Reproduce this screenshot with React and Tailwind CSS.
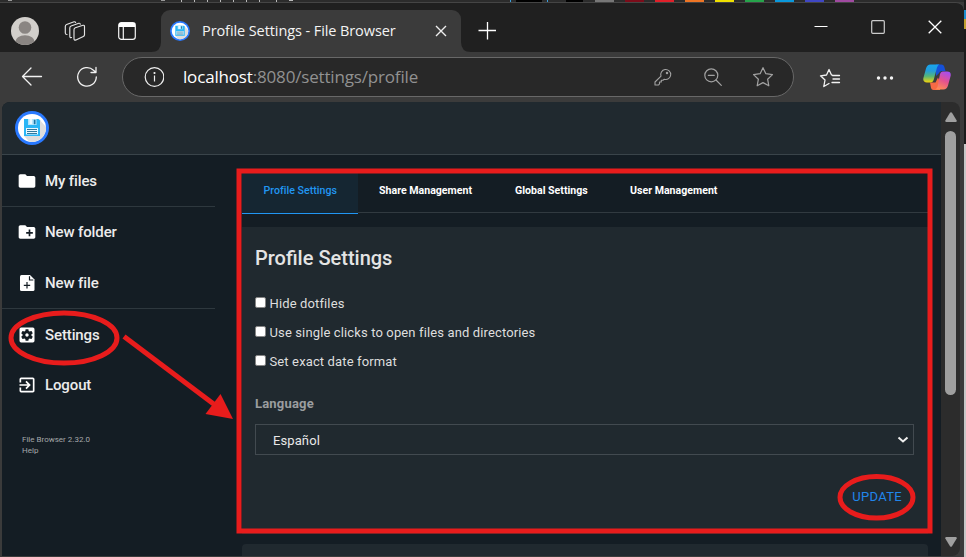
import React from "react";
import {
  MdFolder,
  MdCreateNewFolder,
  MdSettingsApplications,
  MdExitToApp,
} from "react-icons/md";

function Logo({ className }) {
  return (
    <svg viewBox="0 0 34 34" className={className}>
      <circle cx="17" cy="17" r="17" fill="#2979ff" />
      <circle cx="17" cy="17" r="14" fill="#fff" />
      <path d="M24 8l7 8a14 14 0 0 1-17 14.6L9 25z" fill="#dedede" />
      <path d="M9 8h14.500L25 9.500V25H9z" fill="#29b6f6" />
      <path d="M13 8h8.500v6H13z" fill="#b3e5fc" />
      <path d="M14.500 8h2.500v5h-2.500z" fill="#e8f8ff" />
      <path d="M18.800 8.800h1.700v4.500h-1.700z" fill="#1976a8" />
      <path d="M11 17h12v6.500H11z" fill="#e8f8ff" />
      <path d="M12 18.500h10M12 20.500h10M12 22.500h10" stroke="#1c6a92" strokeWidth=".9" />
    </svg>
  );
}

function NewFileIcon({ className }) {
  return (
    <svg viewBox="0 0 20 20" className={className}>
      <path d="M4.500 2H13l4.500 4.500V16.500q0 1.500-1.500 1.500H4.500Q3 18 3 16.500V3.500Q3 2 4.500 2z" fill="currentColor" />
      <path d="M12.500 3.200V7h3.800M10 9v6.500M6.800 12.300h6.400" fill="none" stroke="#141d24" strokeWidth="1.2" />
    </svg>
  );
}

function Avatar() {
  return (
    <svg viewBox="0 0 28 28" className="h-7 w-7">
      <clipPath id="av">
        <circle cx="14" cy="14" r="14" />
      </clipPath>
      <g clipPath="url(#av)">
        <rect width="28" height="28" fill="#d2cfcb" />
        <circle cx="14" cy="10.500" r="6.300" fill="#8a8582" />
        <ellipse cx="14" cy="25" rx="9.800" ry="6.800" fill="#8a8582" />
      </g>
    </svg>
  );
}

function WorkspacesIcon() {
  return (
    <svg viewBox="0 0 22 22" className="h-[22px] w-[22px]" fill="none" stroke="#e4e4e4" strokeWidth="1.15" strokeLinejoin="round" strokeLinecap="round">
      <path d="M11.300 7.800l7.700-2.500q1.500-.3 1.500 1.200v8.200q0 1.300-1.200 1.700l-7.300 3.500q-2 .7-2-1.200V9.800q0-1.500 1.300-2z" />
      <path d="M7.500 17.500q-1.700.5-1.700-1.300V8q0-1.500 1.300-2l7.700-2.700q1.200-.3 1.500.9" />
      <path d="M3 14.500q-1.700 0-1.700-1.500V6.500q0-1.500 1.300-2l7.500-2.700q1-.3 1.500.6" />
    </svg>
  );
}

function TabsIcon() {
  return (
    <svg viewBox="0 0 18 18" className="h-[18px] w-[18px]" fill="none" stroke="#f5f5f5" strokeWidth="1.2">
      <rect x=".7" y=".7" width="16.600" height="16.600" rx="2.600" />
      <path d="M1 3h16" stroke="#fff" strokeWidth="4" />
      <path d="M5.300 5v12" />
    </svg>
  );
}

const STAR = "M10 1.500l2.600 5.500 6 .8-4.400 4.200 1.100 6L10 15.100 4.700 18l1.100-6L1.400 7.800l6-.8z";

function CopilotIcon() {
  return (
    <svg viewBox="0 0 28 26" className="h-[26px] w-7">
      <defs>
        <linearGradient id="ca" x1="0" y1="0" x2="0" y2="1">
          <stop offset="0" stopColor="#17a5ef" />
          <stop offset=".35" stopColor="#249dd9" />
          <stop offset=".65" stopColor="#55b578" />
          <stop offset="1" stopColor="#f4d40b" />
        </linearGradient>
        <linearGradient id="cb" x1=".7" y1="0" x2=".3" y2="1">
          <stop offset="0" stopColor="#a64df0" />
          <stop offset=".5" stopColor="#e5528e" />
          <stop offset="1" stopColor="#ff8c55" />
        </linearGradient>
      </defs>
      <path d="M13 .5h5.500q2 0 2.700 2L22.500 7H19q-2.500 0-3.300 2.500L13 12z" fill="#1550d8" />
      <path d="M7 18.500h5.500l2.500-5 3 7-1 5.500h-6.500q-2 0-2.500-2z" fill="#f76a45" />
      <path d="M7.500.5H16.500q-1.800.7-2.500 3L10.800 15.500Q10 18.500 7.500 18.500H4Q-.5 18.500.4 14L3 4.500Q4.200.5 7.500.5z" fill="url(#ca)" />
      <path d="M19.500 7.500H24q4.500 0 3.600 4.500L25 21.500q-1.200 4-4.500 4H12q1.800-.5 2.500-2.800L17 10Q17.800 7.500 19.500 7.500z" fill="url(#cb)" />
    </svg>
  );
}

function DesktopStrip() {
  return (
    <div className="flex h-0.5 shrink-0 bg-[#2c2c2c]">
      <div className="ml-2 h-px w-1 bg-[#999]" />
      <div className="ml-[149px] h-px w-1 bg-[#999]" />
      <div className="ml-4 h-0.5 w-px bg-[#bbb]" />
      <div className="ml-3 h-0.5 w-px bg-[#bbb]" />
      <div className="ml-3 h-0.5 w-px bg-[#bbb]" />
      <div className="ml-3 h-0.5 w-px bg-[#bbb]" />
      <div className="ml-3 h-0.5 w-px bg-[#bbb]" />
      <div className="ml-3 h-0.5 w-px bg-[#bbb]" />
      <div className="ml-3 h-0.5 w-px bg-[#bbb]" />
      <div className="ml-4 h-0.5 w-px bg-[#bbb]" />
      <div className="ml-3 h-px w-1 bg-[#bbb]" />
      <div className="ml-auto mr-[5px] h-0.5 w-px bg-[#3a9fdc]" />
      <div className="flex w-[448px] shrink-0">
        <div className="h-0.5 w-[26px] bg-black" />
        <div className="ml-[5px] h-0.5 w-px bg-[#3a9fdc]" />
        <div className="ml-[18px] h-0.5 w-[17px] bg-black" />
        <div className="ml-3 h-0.5 w-[19px] bg-[#777]" />
        <div className="ml-[11px] h-0.5 w-[19px] bg-[#7c0c1a]" />
        <div className="ml-[11px] h-0.5 w-[19px] bg-[#e0202a]" />
        <div className="ml-[11px] h-0.5 w-[19px] bg-[#ee7525]" />
        <div className="ml-[11px] h-0.5 w-[19px] bg-[#efe000]" />
        <div className="ml-[11px] h-0.5 w-[19px] bg-[#26a44b]" />
        <div className="ml-[11px] h-0.5 w-[19px] bg-[#0a98dc]" />
        <div className="ml-[11px] h-0.5 w-[19px] bg-[#3f47c4]" />
        <div className="ml-[11px] h-0.5 w-[19px] bg-[#a04aa0]" />
      </div>
    </div>
  );
}

function TitleBar() {
  return (
    <div className="flex h-[50px] shrink-0 items-stretch rounded-tr-lg border-t border-[#454545] bg-[#202020]">
      <div className="flex w-[151px] items-center pb-px pl-[11px] pt-[7px]">
        <Avatar />
        <div className="ml-[25px]"><WorkspacesIcon /></div>
        <div className="ml-[32px]"><TabsIcon /></div>
      </div>
      <svg viewBox="0 0 10 10" className="h-2.5 w-2.5 self-end" fill="#3b3b3b"><path d="M10 0v10H0Q10 10 10 0z" /></svg>
      <div className="mt-[7px] flex w-[300px] items-center rounded-t-[9px] bg-[#3b3b3b] pb-[3px] pl-[9px]">
        <Logo className="mt-0.5 h-5 w-5 shrink-0" />
        <span className="ml-3 mt-0.5 w-[200px] whitespace-nowrap font-['Open_Sans',sans-serif] text-[14.5px] tracking-[-0.09px] text-[#f4f4f4]">
          Profile Settings - File Browser
        </span>
        <svg viewBox="0 0 12 12" className="ml-[33px] mt-[3px] h-3 w-3 shrink-0" stroke="#eee" strokeWidth="1.4"><path d="M1 1l10 10M11 1L1 11" /></svg>
      </div>
      <svg viewBox="0 0 10 10" className="h-2.5 w-2.5 self-end" fill="#3b3b3b"><path d="M0 0v10h10Q0 10 0 0z" /></svg>
      <svg viewBox="0 0 18 18" className="ml-[7px] mt-[19px] h-[18px] w-[18px]" stroke="#fff" strokeWidth="1.3"><path d="M9.500 0v17.500M.5 8.500h18" /></svg>
      <div className="ml-auto flex pr-[22px] pt-[17px]">
        <svg viewBox="0 0 14 14" className="mr-[43px] h-3.5 w-3.5" stroke="#fff"><path d="M.5 6.500h13" /></svg>
        <svg viewBox="0 0 14 14" className="mr-[43px] h-3.5 w-3.5" fill="none" stroke="#ccc" strokeWidth="1.2"><rect x=".7" y=".7" width="12.600" height="12.600" rx="1" /></svg>
        <svg viewBox="0 0 14 14" className="h-3.5 w-3.5" stroke="#fff" strokeWidth="1.3"><path d="M.7.7l12.600 12.600M13.300.7L.7 13.300" /></svg>
      </div>
    </div>
  );
}

function Toolbar() {
  return (
    <div className="flex h-[50px] shrink-0 items-center bg-[#3b3b3b] pl-[21px]">
      <svg viewBox="0 0 22 20" className="h-5 w-[22px]" fill="none" stroke="#f2f2f2" strokeWidth="1.3" strokeLinecap="round" strokeLinejoin="round"><path d="M20.500 9.500H1.500M10 1L1.500 9.500 10 18" /></svg>
      <svg viewBox="0 0 22 22" className="ml-[33px] h-[22px] w-[22px]" fill="none" stroke="#f2f2f2" strokeWidth="1.3" strokeLinecap="round" strokeLinejoin="round"><path d="M20.300 11A9.300 9.300 0 1 1 17.500 4.200L19.500 6M20 1.500V6.500H15" /></svg>
      <div className="ml-6 flex h-10 w-[672px] items-center rounded-full border border-[#686868] bg-[#282828] pl-[21px]">
        <svg viewBox="0 0 20 20" className="h-5 w-5 shrink-0" fill="none" stroke="#eee" strokeWidth="1.2"><circle cx="10.500" cy="10" r="9.300" /><path d="M10.500 8.500V14.500" /><circle cx="10.500" cy="6" r=".5" fill="#eee" /></svg>
        <div className="ml-[19px] w-[460px] whitespace-nowrap pb-px font-['Open_Sans',sans-serif] text-[17px] tracking-[-0.17px] text-[#919191]">
          <span className="text-white">localhost</span>:8080/settings/profile
        </div>
        <svg viewBox="0 0 18 18" className="ml-[11px] h-[18px] w-[18px] shrink-0" fill="none" stroke="#a2a2a2" strokeWidth="1.1" strokeLinejoin="round"><path d="M7 8.200A5 5 0 1 1 10.300 11.300L9 12.300H7.300V14H5.500v1.800L4.500 17H1v-3z" /><circle cx="13" cy="5" r=".7" fill="#a2a2a2" /></svg>
        <svg viewBox="0 0 18 18" className="ml-8 h-[18px] w-[18px] shrink-0" fill="none" stroke="#a2a2a2" strokeWidth="1.2" strokeLinecap="round"><circle cx="7.300" cy="7.300" r="6.500" /><path d="M4.300 7.300h6M12 12l5.300 5.300" /></svg>
        <svg viewBox="0 0 20 20" className="ml-[30px] h-[22px] w-[22px] shrink-0" fill="none" stroke="#a2a2a2" strokeWidth="1.1" strokeLinejoin="round"><path d={STAR} /></svg>
      </div>
      <svg viewBox="0 0 22 20" className="ml-[25px] mt-0.5 h-5 w-[22px]" fill="none" stroke="#f2f2f2" strokeWidth="1.3" strokeLinejoin="round" strokeLinecap="round">
        <path d="M14.500 7.500L12.500 6.900 10 1.500 7.500 7l-6 .8L6 12l-1.200 6.500L10 15.500M13.500 7.500h7M14 11h6.500M13 14.500h7.500" />
      </svg>
      <svg viewBox="0 0 18 4" className="ml-[35px] mt-0.5 h-1 w-[18px]" fill="#f4f4f4"><circle cx="2.500" cy="2" r="1.700" /><circle cx="9" cy="2" r="1.700" /><circle cx="15.500" cy="2" r="1.700" /></svg>
      <div className="ml-[29px]"><CopilotIcon /></div>
    </div>
  );
}

function NavItem({ icon: Icon, label, className }) {
  return (
    <div className={"flex items-center gap-2 pl-[15px] text-[15px] font-medium tracking-[-0.12px] text-[#ececec] " + className}>
      <Icon className="mb-px h-5 w-5 text-white" />
      <span>{label}</span>
    </div>
  );
}

function Sidebar() {
  return (
    <nav className="w-[213px] shrink-0">
      <NavItem icon={MdFolder} label="My files" className="h-[51px] pt-[2px]" />
      <div className="border-y border-[#2e383e]">
        <NavItem icon={MdCreateNewFolder} label="New folder" className="h-[51px]" />
        <NavItem icon={NewFileIcon} label="New file" className="h-[50px]" />
      </div>
      <NavItem icon={MdSettingsApplications} label="Settings" className="h-[51px] pt-[2px]" />
      <NavItem icon={MdExitToApp} label="Logout" className="h-[50px]" />
      <div className="mt-[24px] pl-5 text-[8px] leading-[11px] text-[#a5a8aa]">
        <p>File Browser 2.32.0</p>
        <p>Help</p>
      </div>
    </nav>
  );
}

function Check({ label }) {
  return (
    <label className="flex h-[29px] items-center">
      <span className="mb-[3px] h-[11px] w-[11px] rounded-[2px] border border-[#858585] bg-white" />
      <span className="ml-[3.5px] text-[13px] tracking-[0.13px] text-[#dedede]">{label}</span>
    </label>
  );
}

function Settings() {
  return (
    <main className="ml-[27px] flex w-[686px] shrink-0 flex-col pt-[14px]">
      <div className="flex h-[44px] border-b border-[#313a40] text-[10.6px] font-bold text-white">
        <div className="h-[45px] w-[116px] border-b border-[#2196f3] bg-[#152632] pl-[21.5px] pt-[14px] font-medium tracking-[0.03px] text-[#2196f3]">Profile Settings</div>
        <div className="w-[136px] pl-[21px] pt-[14px]">Share Management</div>
        <div className="w-[115px] pl-[21px] pt-[14px]">Global Settings</div>
        <div className="pl-[21px] pt-[14px]">User Management</div>
      </div>
      <section className="mt-[14px] h-[307px] bg-[#20292f] px-[13px] pt-4">
        <h2 className="h-[46px] text-[20px] font-medium leading-[30px] text-[#e4e4e4]">Profile Settings</h2>
        <Check label="Hide dotfiles" />
        <Check label="Use single clicks to open files and directories" />
        <Check label="Set exact date format" />
        <h3 className="mt-[18px] text-[13px] font-bold leading-5 tracking-[0.18px] text-[#9a9d9f]">Language</h3>
        <div className="mt-[10px] flex h-[31px] w-[659px] items-center justify-between border border-[#424a50] pl-[17px] pr-1 text-[13px] tracking-[0.1px] text-[#e8e8e8]">
          <span className="pt-[3px]">Español</span>
          <svg viewBox="0 0 12 8" className="h-2 w-3" fill="none" stroke="#eee" strokeWidth="2"><path d="M1.500 1.500L6 5.500l4.500-4" /></svg>
        </div>
        <div className="mt-[32px] pr-[13px] text-right text-[13px] leading-5 tracking-[0.3px] text-[#2186eb]">UPDATE</div>
      </section>
      <section className="mt-[10px] h-3 rounded-t-sm bg-[#20292f]" />
    </main>
  );
}

function Scrollbar() {
  return (
    <div className="flex w-[19px] shrink-0 flex-col items-center rounded-r-lg bg-[#2c2c2c] pb-[9px] pt-[10px]">
      <svg viewBox="0 0 12 10" className="h-2.5 w-3" fill="#9f9f9f"><path d="M5 .8q1-1 2 0l4.700 7.700q.3 1.300-1 1.500H1.300Q0 9.800.3 8.500z" /></svg>
      <div className="mt-[9px] h-[264px] w-[11px] rounded-full bg-[#9f9f9f]" />
      <svg viewBox="0 0 12 10" className="mt-auto h-2.5 w-3" fill="#9f9f9f"><path d="M5 9.200q1 1 2 0l4.700-7.700Q12 .2 10.700 0H1.300Q0 .2.3 1.500z" /></svg>
    </div>
  );
}

function Annotations() {
  return (
    <svg viewBox="0 0 966 557" className="pointer-events-none absolute left-0 top-0 h-[557px] w-[966px]" fill="none" stroke="#e81c1c" strokeWidth="5">
      <rect x="239" y="171" width="691" height="360" />
      <ellipse cx="64" cy="338" rx="53" ry="25" />
      <ellipse cx="876.500" cy="497.300" rx="36.500" ry="20.800" />
      <path d="M124 336.500L215 405" />
      <path d="M220.500 394L233 419l-27.500-5z" fill="#e81c1c" stroke="none" />
    </svg>
  );
}

export default function App() {
  return (
    <div className="relative flex h-[557px] w-[966px] overflow-hidden bg-[#3b3b3b] font-[Roboto,sans-serif]">
      <div className="flex w-[964px] shrink-0 flex-col">
        <DesktopStrip />
        <TitleBar />
        <Toolbar />
        <div className="flex h-[454px] pl-0.5">
          <div className="flex w-[939px] shrink-0 flex-col overflow-hidden rounded-tl-lg bg-[#141d24]">
            <header className="h-[53px] shrink-0 border-b border-[#3a444a] bg-[#20292f] pl-[13px] pt-[9px]">
              <Logo className="h-[34px] w-[34px]" />
            </header>
            <div className="flex">
              <Sidebar />
              <Settings />
            </div>
          </div>
          <Scrollbar />
        </div>
      </div>
      <div className="flex w-0.5 flex-col">
        <div className="h-[10px] bg-[#1c1c1c]" />
        <div className="h-[9px] bg-[#1c8fd0]" />
        <div className="h-[10px] bg-[#c0a030]" />
        <div className="h-[115px] bg-[#1c1c1c]" />
        <div className="flex-1 bg-[#c8c8c8]" />
      </div>
      <Annotations />
    </div>
  );
}
